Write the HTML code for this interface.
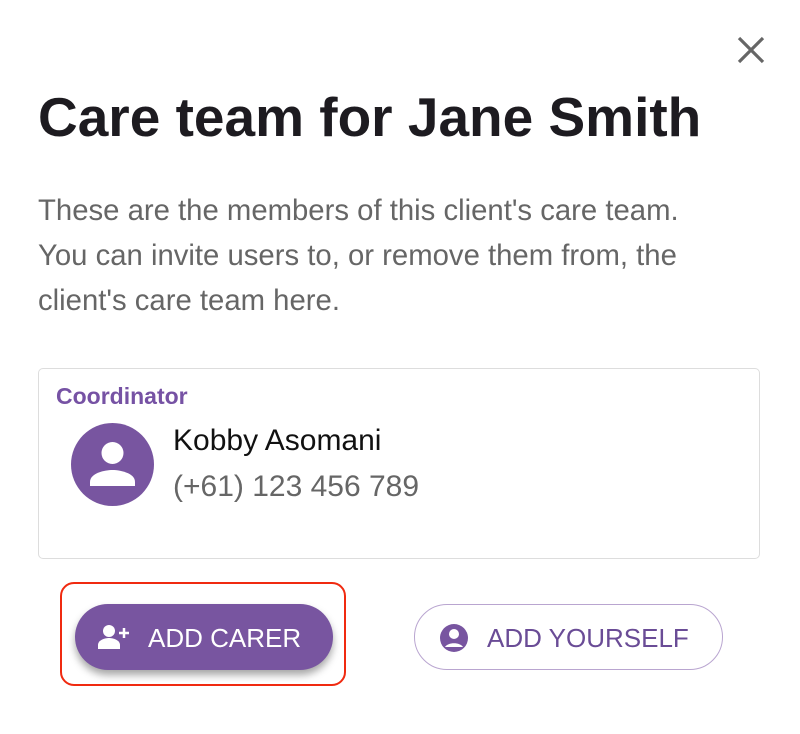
<!DOCTYPE html>
<html><head><style>
body{margin:0;width:800px;height:734px;background:#fff;font-family:"Liberation Sans",sans-serif;position:relative;overflow:hidden}
.a{position:absolute}
h1{position:absolute;left:38px;top:85px;margin:0;font-size:55px;font-weight:bold;color:#1d1b20;white-space:nowrap}
.p{left:38px;top:188px;font-size:29.3px;line-height:45px;color:#666;white-space:nowrap}
.card{left:38px;top:368px;width:720px;height:189px;border:1.5px solid #ddd;border-radius:5px}
.btn1{left:75px;top:604px;width:258px;height:66px;border-radius:33px;background:#7855a0;box-shadow:0 5px 8px rgba(0,0,0,.35);color:#fff;font-size:26px}
.btn2{left:414px;top:604px;width:307px;height:64px;border-radius:33px;border:1.5px solid #b9a5d0;color:#6a4c96;font-size:26px}
</style></head><body>
<svg class="a" style="left:735px;top:34px" width="32" height="32"><path d="M4 4L28 28M28 4L4 28" stroke="#666" stroke-width="3.2"/></svg>
<h1>Care team for Jane Smith</h1>
<div class="a p">These are the members of this client's care team.<br>You can invite users to, or remove them from, the<br>client's care team here.</div>
<div class="a card"></div>
<div class="a" style="left:56px;top:383px;font-size:23px;font-weight:bold;color:#7652a4">Coordinator</div>
<svg class="a" style="left:71px;top:423px" width="83" height="83"><circle cx="41.5" cy="41.5" r="41.5" fill="#7855a0"/><circle cx="41.5" cy="30" r="11" fill="#fff"/><path d="M19 63v-4c0-9 15-12 22.5-12S64 50 64 59v4z" fill="#fff"/></svg>
<div class="a" style="left:173px;top:424px;font-size:30px;color:#111">Kobby Asomani</div>
<div class="a" style="left:173px;top:470px;font-size:30px;color:#666">(+61) 123 456 789</div>
<div class="a" style="left:60px;top:582px;width:286px;height:104px;border:2.5px solid #f02a10;border-radius:14px;box-sizing:border-box"></div>
<div class="a btn1"><svg class="a" style="left:22px;top:20px" width="36" height="26"><circle cx="12" cy="7" r="6" fill="#fff"/><path d="M1 25v-4c0-5 7-7 11-7s11 2 11 7v4z" fill="#fff"/><path d="M27 4v10M22 9h10" stroke="#fff" stroke-width="2.5"/></svg><span class="a" style="left:73px;top:19px">ADD CARER</span></div>
<div class="a btn2"><svg class="a" style="left:24px;top:18px" width="30" height="30"><circle cx="15" cy="15" r="14" fill="#7855a0"/><circle cx="15" cy="11" r="5" fill="#fff"/><path d="M6 24c3-5 15-5 18 0" fill="#fff"/></svg><span class="a" style="left:72px;top:18px">ADD YOURSELF</span></div>
</body></html>
